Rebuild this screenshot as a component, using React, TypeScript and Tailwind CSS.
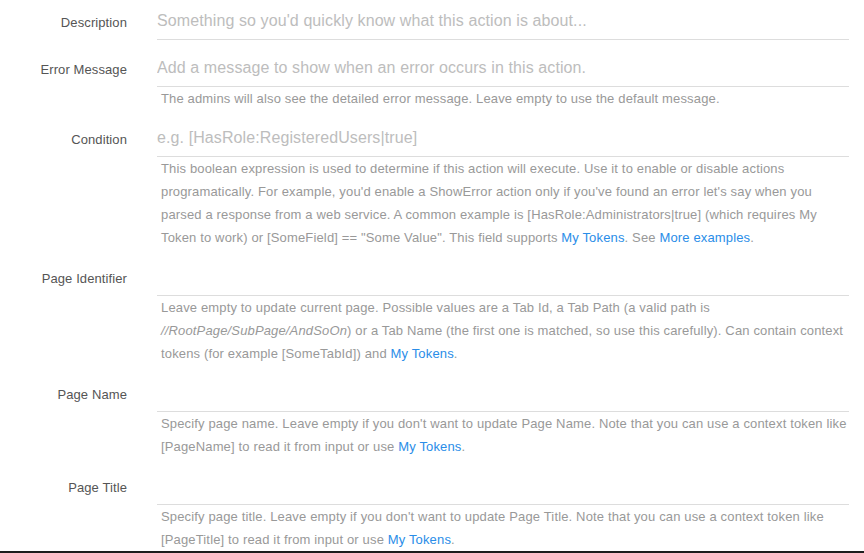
import React from "react";

const Link = ({ children }: { children: React.ReactNode }) => (
  <a className="text-[#2a8de8]" href="#">
    {children}
  </a>
);

type RowProps = {
  label: string;
  placeholder?: string;
  help?: React.ReactNode;
};

const Row = ({ label, placeholder, help }: RowProps) => (
  <div className="flex">
    <div className="w-[127px] shrink-0 pt-[8px] text-right text-[13px] leading-[18px] tracking-[0.1px] text-[#555]">
      {label}
    </div>
    <div className="ml-[30px] w-[692px] shrink-0">
      <input
        className="block h-[34px] w-full border-0 border-b border-[#ddd] bg-transparent pt-[5px] pb-[8px] text-[16px] leading-[20px] tracking-[0.1px] text-[#555] outline-none placeholder:text-[#bdbdbd]"
        placeholder={placeholder}
      />
      {help && (
        <div className="pl-[4px] text-[13px] leading-[23px] tracking-[0.15px] text-[#999]">
          {help}
        </div>
      )}
    </div>
  </div>
);

export default function App() {
  return (
    <div
      className="flex h-[553px] w-[864px] flex-col bg-white"
      style={{ fontFamily: '"Liberation Sans", Arial, sans-serif' }}
    >
      <div className="flex flex-1 flex-col gap-[13px] pt-[6px]">
        <Row
          label="Description"
          placeholder="Something so you'd quickly know what this action is about..."
        />
        <Row
          label="Error Message"
          placeholder="Add a message to show when an error occurs in this action."
          help="The admins will also see the detailed error message. Leave empty to use the default message."
        />
        <Row
          label="Condition"
          placeholder="e.g. [HasRole:RegisteredUsers|true]"
          help={
            <>
              This boolean expression is used to determine if this action will execute. Use it to enable or disable actions
              <br />
              programatically. For example, you'd enable a ShowError action only if you've found an error let's say when you
              <br />
              parsed a response from a web service. A common example is [HasRole:Administrators|true] (which requires My
              <br />
              Token to work) or [SomeField] == "Some Value". This field supports <Link>My Tokens</Link>. See{" "}
              <Link>More examples</Link>.
            </>
          }
        />
        <Row
          label="Page Identifier"
          help={
            <>
              Leave empty to update current page. Possible values are a Tab Id, a Tab Path (a valid path is
              <br />
              <i>//RootPage/SubPage/AndSoOn</i>) or a Tab Name (the first one is matched, so use this carefully). Can contain context
              <br />
              tokens (for example [SomeTabId]) and <Link>My Tokens</Link>.
            </>
          }
        />
        <Row
          label="Page Name"
          help={
            <>
              Specify page name. Leave empty if you don't want to update Page Name. Note that you can use a context token like
              <br />
              [PageName] to read it from input or use <Link>My Tokens</Link>.
            </>
          }
        />
        <Row
          label="Page Title"
          help={
            <>
              Specify page title. Leave empty if you don't want to update Page Title. Note that you can use a context token like
              <br />
              [PageTitle] to read it from input or use <Link>My Tokens</Link>.
            </>
          }
        />
      </div>
      <div className="h-[2px] shrink-0 bg-[#1e1e1e]" />
    </div>
  );
}
